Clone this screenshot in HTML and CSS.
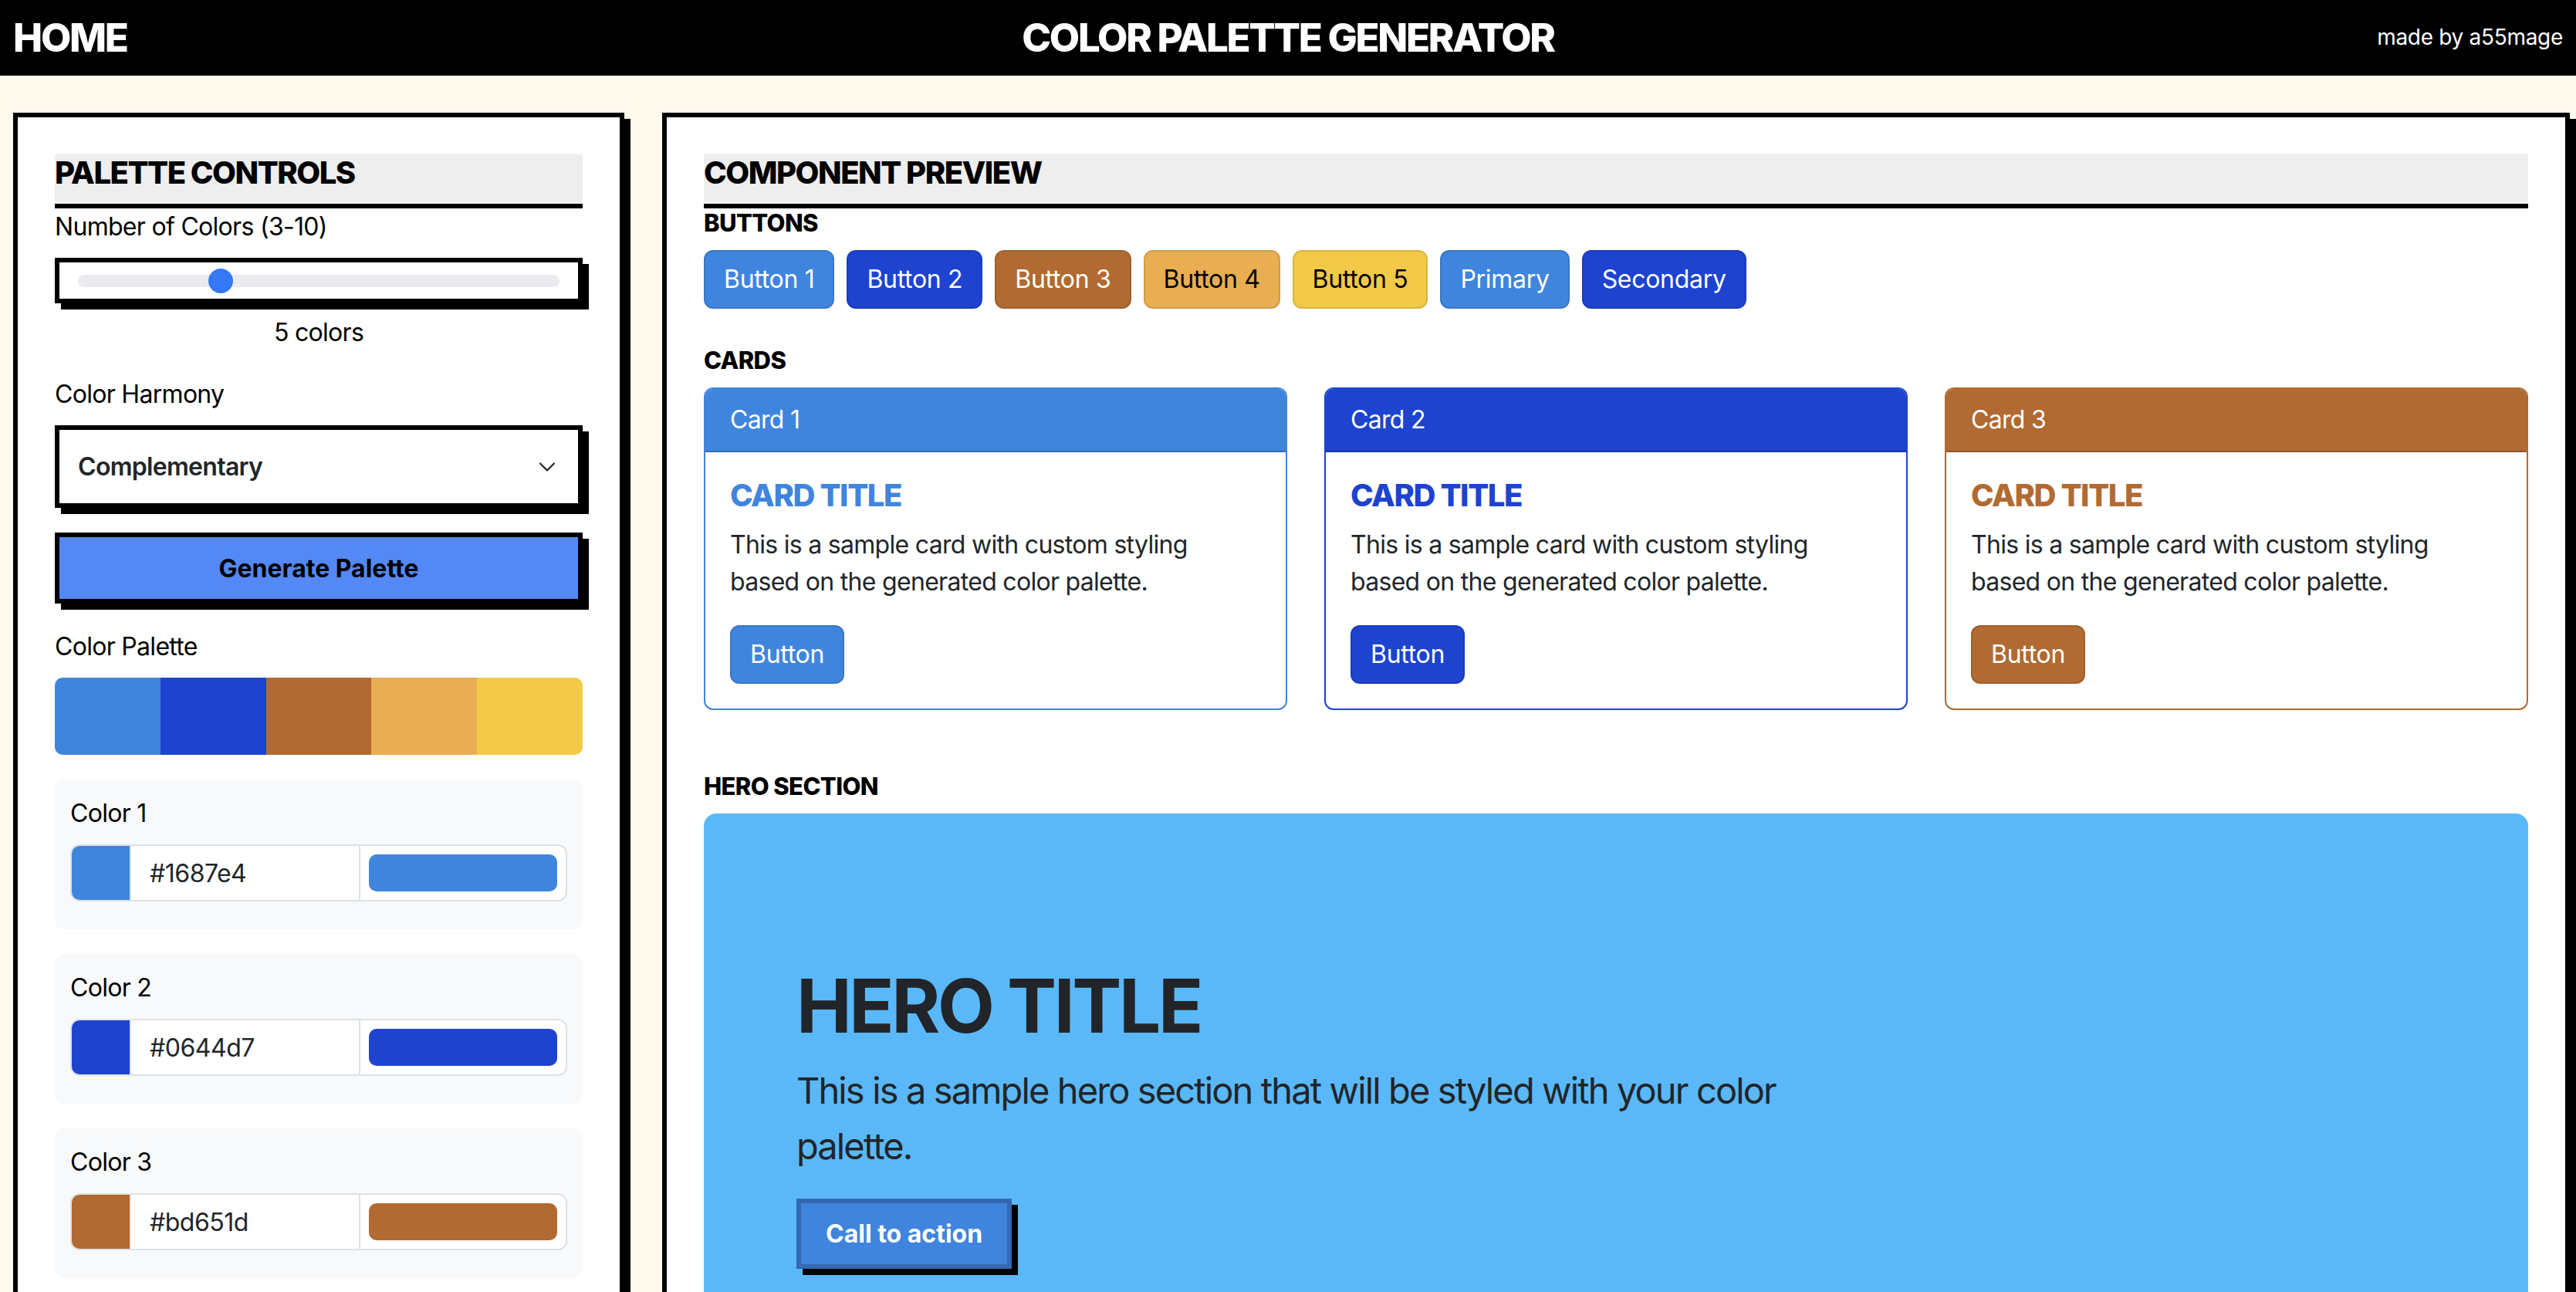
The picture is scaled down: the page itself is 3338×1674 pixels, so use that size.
FILE: index.html
```html
<!DOCTYPE html>
<html lang="en">
<head>
<meta charset="utf-8">
<title>Color Palette Generator</title>
<link rel="stylesheet" href="styles.css">
</head>
<body>
<header class="topbar">
  <a class="home" href="#">HOME</a>
  <h1 class="site-title">COLOR PALETTE GENERATOR</h1>
  <span class="credit">made by a55mage</span>
</header>

<main class="layout">
  <aside class="panel">
    <h2 class="panel-title">PALETTE CONTROLS</h2>

    <div class="group">
      <label class="field-label" for="count">Number of Colors (3-10)</label>
      <div class="slider-box">
        <input id="count" class="range" type="range" min="3" max="10" value="5">
      </div>
      <div class="slider-value">5 colors</div>
    </div>

    <div class="group">
      <label class="field-label" for="harmony">Color Harmony</label>
      <div class="select-box">
        <select id="harmony" class="select">
          <option>Complementary</option>
          <option>Analogous</option>
          <option>Triadic</option>
        </select>
        <svg class="chevron" viewBox="0 0 20 12" width="20" height="12" aria-hidden="true"><path d="M1 1.5 L10 10.5 L19 1.5" fill="none" stroke="#212529" stroke-width="2.2" stroke-linecap="round" stroke-linejoin="round"/></svg>
      </div>
    </div>

    <button class="generate" type="button">Generate Palette</button>

    <div class="group">
      <div class="field-label">Color Palette</div>
      <div class="palette-bar">
        <span class="c1"></span><span class="c2"></span><span class="c3"></span><span class="c4"></span><span class="c5"></span>
      </div>
    </div>

    <div class="color-item">
      <div class="item-label">Color 1</div>
      <div class="input-group">
        <span class="swatch c1"></span>
        <input class="hex" type="text" value="#1687e4">
        <span class="picker"><span class="picker-fill c1"></span></span>
      </div>
    </div>
    <div class="color-item">
      <div class="item-label">Color 2</div>
      <div class="input-group">
        <span class="swatch c2"></span>
        <input class="hex" type="text" value="#0644d7">
        <span class="picker"><span class="picker-fill c2"></span></span>
      </div>
    </div>
    <div class="color-item">
      <div class="item-label">Color 3</div>
      <div class="input-group">
        <span class="swatch c3"></span>
        <input class="hex" type="text" value="#bd651d">
        <span class="picker"><span class="picker-fill c3"></span></span>
      </div>
    </div>
    <div class="color-item">
      <div class="item-label">Color 4</div>
      <div class="input-group">
        <span class="swatch c4"></span>
        <input class="hex" type="text" value="#f2ad42">
        <span class="picker"><span class="picker-fill c4"></span></span>
      </div>
    </div>
    <div class="color-item">
      <div class="item-label">Color 5</div>
      <div class="input-group">
        <span class="swatch c5"></span>
        <input class="hex" type="text" value="#fdca34">
        <span class="picker"><span class="picker-fill c5"></span></span>
      </div>
    </div>
  </aside>

  <section class="panel">
    <h2 class="panel-title">COMPONENT PREVIEW</h2>

    <div class="section">
      <h3 class="section-label">BUTTONS</h3>
      <div class="btn-row">
        <button class="btn c1 light-text" type="button">Button 1</button>
        <button class="btn c2 light-text" type="button">Button 2</button>
        <button class="btn c3 light-text" type="button">Button 3</button>
        <button class="btn c4" type="button">Button 4</button>
        <button class="btn c5" type="button">Button 5</button>
        <button class="btn c1 light-text" type="button">Primary</button>
        <button class="btn c2 light-text" type="button">Secondary</button>
      </div>
    </div>

    <div class="section section-cards">
      <h3 class="section-label">CARDS</h3>
      <div class="cards">
        <div class="card card-1">
          <div class="card-header">Card 1</div>
          <div class="card-body">
            <h4 class="card-title">CARD TITLE</h4>
            <p class="card-text">This is a sample card with custom styling based on the generated color palette.</p>
            <button class="btn c1 light-text" type="button">Button</button>
          </div>
        </div>
        <div class="card card-2">
          <div class="card-header">Card 2</div>
          <div class="card-body">
            <h4 class="card-title">CARD TITLE</h4>
            <p class="card-text">This is a sample card with custom styling based on the generated color palette.</p>
            <button class="btn c2 light-text" type="button">Button</button>
          </div>
        </div>
        <div class="card card-3">
          <div class="card-header">Card 3</div>
          <div class="card-body">
            <h4 class="card-title">CARD TITLE</h4>
            <p class="card-text">This is a sample card with custom styling based on the generated color palette.</p>
            <button class="btn c3 light-text" type="button">Button</button>
          </div>
        </div>
      </div>
    </div>

    <div class="section">
      <h3 class="section-label">HERO SECTION</h3>
      <div class="hero">
        <div class="hero-inner">
          <h2 class="hero-title">HERO TITLE</h2>
          <p class="hero-text">This is a sample hero section that will be styled with your color palette.</p>
          <button class="cta" type="button">Call to action</button>
        </div>
      </div>
    </div>
  </section>
</main>
</body>
</html>
```
FILE: styles.css
```css
* { box-sizing: border-box; }

body {
  margin: 0;
  background: #fff9ee;
  color: #000;
  font-family: Inter, "Noto Sans", sans-serif;
  font-size: 32px;
  line-height: 1.5;
  letter-spacing: -0.7px;
}

/* palette colours (as rendered in the reference) */
.c1 { background: #4085dd; }
.c2 { background: #1d43cf; }
.c3 { background: #b16a31; }
.c4 { background: #e8ae51; }
.c5 { background: #f3c948; }

/* ---------- top bar ---------- */
.topbar {
  height: 98px;
  background: #000;
  color: #fff;
  display: grid;
  grid-template-columns: 1fr auto 1fr;
  align-items: center;
  padding: 0 17px;
}
.home {
  justify-self: start;
  color: #fff;
  text-decoration: none;
  font-size: 51px;
  font-weight: 800;
  letter-spacing: -0.045em;
  line-height: 1.2;
}
.site-title {
  margin: 0;
  font-size: 51px;
  font-weight: 800;
  letter-spacing: -0.045em;
  line-height: 1.2;
}
.credit {
  justify-self: end;
  font-size: 28px;
  line-height: 1.2;
  letter-spacing: -0.3px;
}

/* ---------- layout ---------- */
.layout {
  display: grid;
  grid-template-columns: 792px 2472px;
  column-gap: 49px;
  align-items: start;
  padding: 48px 8px 48px 17px;
}
.panel {
  background: #fff;
  border: 6px solid #000;
  box-shadow: 8px 8px 0 #000;
  padding: 48px;
}
.panel-title {
  margin: 0;
  background: #eeeeee;
  font-size: 40px;
  line-height: 48px;
  padding-bottom: 16px;
  border-bottom: 6px solid #000;
  font-weight: 800;
  letter-spacing: -0.037em;
}

/* ---------- controls ---------- */
.group { margin-bottom: 32px; }
.field-label {
  display: block;
  line-height: 48px;
  margin-bottom: 16px;
}
.slider-box {
  height: 59px;
  border: 6px solid #000;
  box-shadow: 8px 8px 0 #000;
  padding: 0 24px;
  display: flex;
  align-items: center;
}
.range {
  -webkit-appearance: none;
  appearance: none;
  width: 100%;
  height: 16px;
  margin: 0;
  background: #ebebef;
  border-radius: 8px;
  outline: none;
}
.range::-webkit-slider-thumb {
  -webkit-appearance: none;
  appearance: none;
  width: 32px;
  height: 32px;
  border-radius: 50%;
  background: #3478f6;
  border: 0;
}
.slider-value {
  text-align: center;
  margin-top: 14px;
}
.select-box {
  position: relative;
  height: 107px;
  border: 6px solid #000;
  box-shadow: 8px 8px 0 #000;
}
.select {
  -webkit-appearance: none;
  appearance: none;
  width: 100%;
  height: 100%;
  border: 0;
  border-radius: 0;
  background: #fff;
  padding: 0 24px;
  font-family: inherit;
  font-size: 32px;
  font-weight: 600;
  letter-spacing: -0.7px;
  color: #212529;
  outline: none;
}
.chevron {
  position: absolute;
  right: 30px;
  top: 42px;
  pointer-events: none;
}
.generate {
  display: block;
  width: 100%;
  height: 92px;
  margin: 0 0 32px;
  border: 6px solid #000;
  box-shadow: 8px 8px 0 #000;
  background: #5488f5;
  color: #000;
  font-family: inherit;
  font-size: 32px;
  font-weight: 700;
}
.palette-bar {
  display: flex;
  height: 100px;
  border-radius: 10px;
  overflow: hidden;
}
.palette-bar span { flex: 1; }

.color-item {
  background: #f8f9fa;
  border-radius: 12px;
  padding: 20px;
  margin-bottom: 32px;
}
.item-label {
  line-height: 48px;
  margin-bottom: 16px;
}
.input-group {
  display: flex;
  height: 74px;
  margin-bottom: 16px;
  border: 2px solid #dee2e6;
  border-radius: 12px;
  overflow: hidden;
  background: #fff;
}
.swatch { width: 75px; flex: none; }
.hex {
  flex: 1;
  min-width: 0;
  border: 0;
  border-left: 2px solid #dee2e6;
  padding: 0 24px;
  font-family: inherit;
  font-size: 32px;
  letter-spacing: -0.5px;
  color: #212529;
  background: #fff;
  outline: none;
}
.picker {
  flex: none;
  width: 268px;
  border-left: 2px solid #dee2e6;
  padding: 11px;
  display: flex;
}
.picker-fill {
  flex: 1;
  border-radius: 10px;
}

/* ---------- preview ---------- */
.section { margin-bottom: 48px; }
.section-cards { margin-bottom: 80px; }
.section-label {
  margin: 0 0 16px;
  font-size: 31px;
  line-height: 38px;
  font-weight: 800;
  letter-spacing: -0.02em;
}
.btn-row {
  display: flex;
  gap: 16px;
}
.btn {
  font-family: inherit;
  font-size: 32px;
  line-height: 48px;
  letter-spacing: -0.3px;
  padding: 12px 24px;
  border: 2px solid rgba(0, 0, 0, 0.1);
  border-radius: 12px;
  color: #000;
}
.btn.light-text { color: #fff; }

.cards {
  display: grid;
  grid-template-columns: repeat(3, 1fr);
  gap: 48px;
}
.card {
  border: 2px solid;
  border-radius: 12px;
  overflow: hidden;
  background: #fff;
}
.card-1 { border-color: #4085dd; }
.card-2 { border-color: #1d43cf; }
.card-3 { border-color: #b16a31; }
.card-header {
  color: #fff;
  padding: 16px 32px;
  line-height: 48px;
  border-bottom: 2px solid rgba(0, 0, 0, 0.175);
}
.card-1 .card-header { background: #4085dd; }
.card-2 .card-header { background: #1d43cf; }
.card-3 .card-header { background: #b16a31; }
.card-body { padding: 32px; }
.card-title {
  margin: 0 0 16px;
  font-size: 40px;
  line-height: 48px;
  font-weight: 800;
  letter-spacing: -0.035em;
}
.card-1 .card-title { color: #4085dd; }
.card-2 .card-title { color: #1d43cf; }
.card-3 .card-title { color: #b16a31; }
.card-text {
  margin: 0 0 32px;
  color: #212529;
}

.hero {
  background: #5ab8f8;
  border-radius: 16px;
  padding: 96px;
}
.hero-inner { padding: 96px 24px; }
.hero-title {
  margin: 0 0 16px;
  font-size: 96px;
  line-height: 1.2;
  font-weight: 700;
  letter-spacing: -0.035em;
  color: #212529;
}
.hero-text {
  width: 66.667%;
  margin: 0 0 32px;
  font-size: 47px;
  line-height: 72px;
  letter-spacing: -0.04em;
  color: #212529;
}
.cta {
  font-family: inherit;
  font-size: 32px;
  line-height: 48px;
  font-weight: 700;
  padding: 15.5px 32px;
  border: 6px solid #3468b2;
  background: #4085dd;
  color: #fff;
  box-shadow: 8px 8px 0 #000;
}
```
